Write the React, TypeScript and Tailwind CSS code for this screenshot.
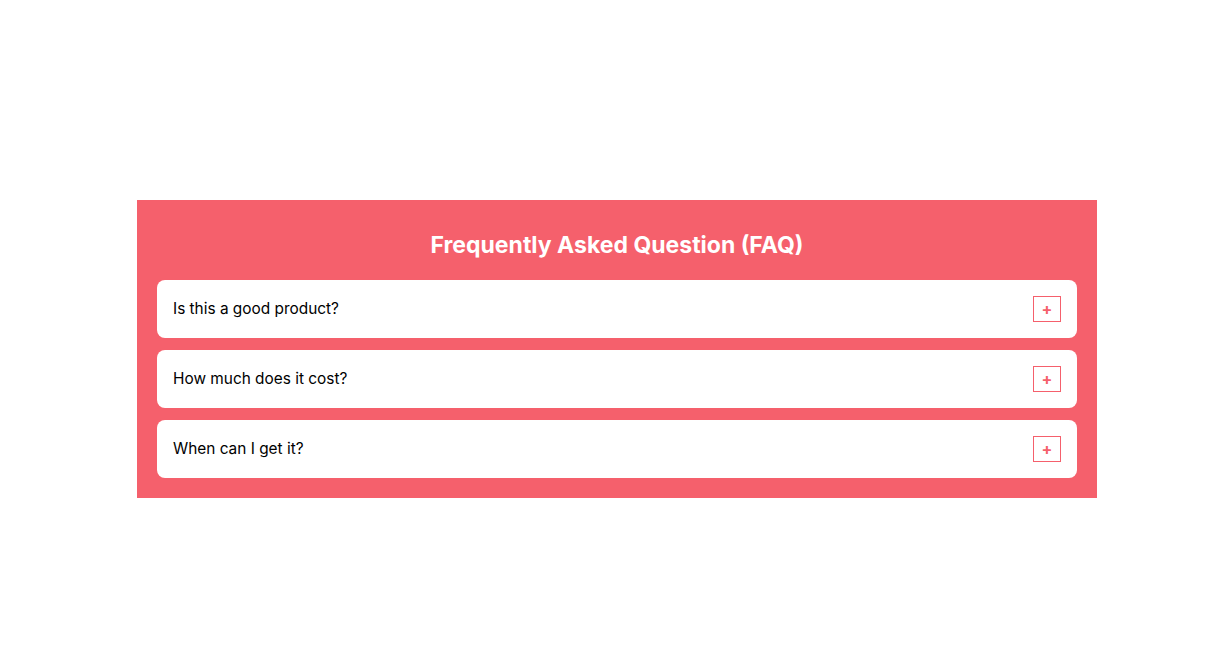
import React, { useState } from 'react';

interface Faq {
    id: number;
    question: string;
    answer: string;
}

const faqs: Faq[] = [
    { id: 1, question: 'Is this a good product?', answer: 'Yes, it is one of our best sellers.' },
    { id: 2, question: 'How much does it cost?', answer: 'It costs $49.99.' },
    { id: 3, question: 'When can I get it?', answer: 'It ships within 2 business days.' },
];

const App: React.FC = () => {
    const [open, setOpen] = useState<number | null>(null);

    return (
        <div className="min-h-screen bg-white pt-[200px] pl-[137px]" style={{ fontFamily: 'Inter, "Noto Sans", sans-serif' }}>
            <div className="w-[960px] bg-[#f5606c] px-5 pt-[29px] pb-5">
                <h2 className="text-center text-[23px] leading-8 font-bold text-white mb-[19px]">
                    Frequently Asked Question (FAQ)
                </h2>
                <div className="flex flex-col gap-3">
                    {faqs.map((faq) => (
                        <div key={faq.id} className="bg-white rounded-lg">
                            <div className="h-[58px] flex items-center justify-between pl-4 pr-4">
                                <p className="text-[15.4px] leading-6 text-black">{faq.question}</p>
                                <button
                                    onClick={() => setOpen(open === faq.id ? null : faq.id)}
                                    className="w-[28px] h-[26px] border border-[#f5606c] flex items-center justify-center text-[#f5606c] text-base font-bold leading-none"
                                >
                                    {open === faq.id ? '−' : '+'}
                                </button>
                            </div>
                            {open === faq.id && (
                                <p className="px-4 pb-4 text-sm text-gray-600">{faq.answer}</p>
                            )}
                        </div>
                    ))}
                </div>
            </div>
        </div>
    );
};

export default App;
